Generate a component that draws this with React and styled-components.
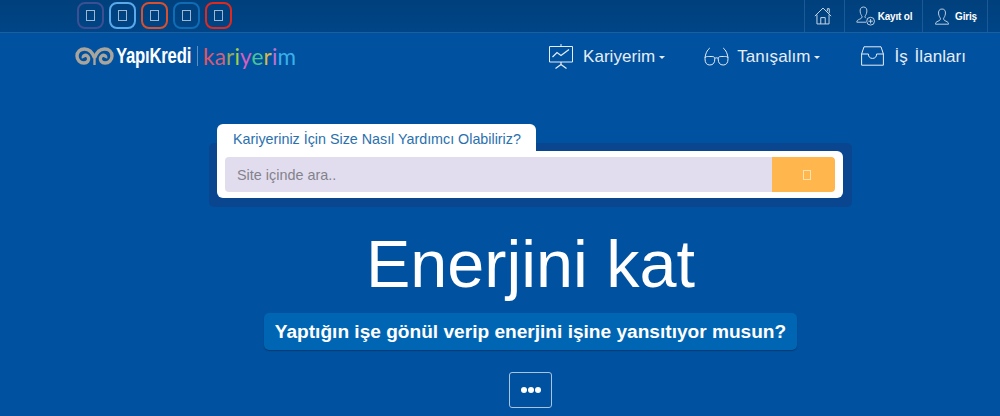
import React from "react";
import styled, {createGlobalStyle} from "styled-components";

const GlobalStyle = createGlobalStyle`
  html, body {
    margin: 0;
    padding: 0;
    height: 416px;
    overflow: hidden;
    background: #00519f;
    font-family: "Liberation Sans", Arial, sans-serif;
  }
`

const Page = styled.div`
  width: 1000px;
  height: 416px;
  overflow: hidden;
  background: #00519f;
`

const TopBar = styled.div`
  height: 32px;
  display: flex;
  justify-content: space-between;
  padding: 0 12px 0 77px;
  background: linear-gradient(to bottom, #00407c, #004587);
  border-bottom: 1px solid #1a5f9f;
`

const Socials = styled.div`
  display: flex;
  gap: 5px;
  padding-top: 2px;
`

const SocialButton = styled.a`
  box-sizing: border-box;
  width: 27px;
  height: 27px;
  display: flex;
  align-items: center;
  justify-content: center;
  border: 2px solid ${props => props.$color};
  border-radius: 8px;
`

const Tofu = styled.span`
  box-sizing: border-box;
  display: block;
  width: ${props => props.$w || 9}px;
  height: ${props => props.$h || 11}px;
  border: 1.5px solid ${props => props.$color || "#9fb6d0"};
`

const UserMenu = styled.div`
  display: flex;
  border-right: 1px solid #1a5a98;
`

const UserItem = styled.a`
  box-sizing: border-box;
  width: ${props => props.$w}px;
  display: flex;
  align-items: center;
  justify-content: center;
  gap: ${props => props.$gap || 2}px;
  padding: 0 ${props => props.$padRight || 0}px 0 ${props => props.$pad || 0}px;
  border-left: 1px solid #1a5a98;
  color: #fff;
  font-size: 10px;
  font-weight: bold;
  letter-spacing: -0.2px;
`

const NavBar = styled.div`
  height: 46px;
  display: flex;
  align-items: center;
  justify-content: space-between;
  padding: 0 34px 0 75px;
`

const Logo = styled.div`
  display: flex;
  align-items: center;
  height: 24px;
`

const BrandName = styled.span`
  display: inline-block;
  width: 76px;
  margin-left: 2px;
  font-size: 22px;
  font-weight: bold;
  color: #fff;
  letter-spacing: -0.3px;
  white-space: nowrap;
  transform: scaleX(0.76);
  transform-origin: left center;
`

const BrandRule = styled.span`
  width: 1px;
  height: 20px;
  margin: 0 5px 0 5px;
  background: #5f8fc0;
`

const Careers = styled.span`
  font-family: Lato, "Liberation Sans", sans-serif;
  font-size: 22.5px;
  letter-spacing: 0.2px;
`

const Letter = styled.span`
  color: ${props => props.$color};
`

const Nav = styled.nav`
  display: flex;
  align-items: center;
`

const NavItem = styled.a`
  display: flex;
  align-items: center;
  margin-left: ${props => props.$gap}px;
  color: #e6edf6;
  font-size: 17px;
  letter-spacing: 0.05px;
  word-spacing: 2px;
`

const NavLabel = styled.span`
  margin: 2px 0 0 ${props => props.$gap}px;
`

const Caret = styled.span`
  width: 0;
  height: 0;
  margin: 2px 0 0 4px;
  border-left: 3px solid transparent;
  border-right: 3px solid transparent;
  border-top: 3px solid #e6edf6;
`

const Hero = styled.main`
  display: flex;
  flex-direction: column;
  align-items: center;
  padding-left: 61px;
`

const SearchFrame = styled.div`
  position: relative;
  box-sizing: border-box;
  width: 643px;
  height: 64px;
  margin-top: 64px;
  padding: 8px;
  background: #0a4690;
  border-radius: 5px;
`

const SearchTab = styled.div`
  position: absolute;
  top: -19px;
  left: 8px;
  box-sizing: border-box;
  width: 319px;
  height: 28px;
  padding: 7px 0 0 16px;
  background: #fff;
  border-radius: 6px 6px 0 0;
  color: #2a70ae;
  font-size: 14.3px;
`

const SearchBox = styled.form`
  box-sizing: border-box;
  width: 626px;
  height: 47px;
  display: flex;
  padding: 6px 8px;
  background: #fff;
  border-radius: 0 6px 6px 6px;
`

const SearchInput = styled.input`
  flex: 1;
  min-width: 0;
  box-sizing: border-box;
  height: 35px;
  padding: 0 12px;
  border: 0;
  outline: 0;
  border-radius: 4px 0 0 4px;
  background: #e2ddee;
  font-family: inherit;
  font-size: 14.4px;

  &::placeholder {
    color: #83828c;
    opacity: 1;
  }
`

const SearchButton = styled.button`
  width: 63px;
  height: 35px;
  display: flex;
  align-items: center;
  justify-content: center;
  padding: 0 0 0 7px;
  border: 0;
  border-radius: 0 4px 4px 0;
  background: #ffb74d;
`

const Title = styled.h1`
  margin: 22px 0 0;
  color: #fff;
  font-size: 66.5px;
  font-weight: normal;
  line-height: 70px;
`

const Slogan = styled.div`
  box-sizing: border-box;
  width: 533px;
  height: 37px;
  margin-top: 14px;
  display: flex;
  align-items: center;
  justify-content: center;
  background: #0066b3;
  border-radius: 5px;
  box-shadow: 0 1px 1px #003a72;
  color: #fff;
  font-size: 19.1px;
  font-weight: bold;
`

const MoreButton = styled.button`
  box-sizing: border-box;
  width: 43px;
  height: 36px;
  margin-top: 22px;
  display: flex;
  align-items: center;
  justify-content: center;
  gap: 1px;
  padding: 0;
  background: transparent;
  border: 1px solid #a9c4e0;
  border-radius: 3px;
`

const Dot = styled.span`
  width: 6px;
  height: 6px;
  border-radius: 50%;
  background: #fff;
`

const HomeIcon = () => (
    <svg width="18" height="18" viewBox="0 0 17 17" fill="none" stroke="#cfdcea" strokeWidth="0.9">
        <path d="M0.8 8.6 L8.5 1 L16.2 8.6"/>
        <path d="M2.8 7.2 V16 H14.2 V7.2"/>
        <path d="M6.4 16 V10 H10.6 V16"/>
        <path d="M12.6 4 V1.6 H14.4 V5.8"/>
    </svg>
)

const UserAddIcon = () => (
    <svg width="20" height="20" viewBox="0 0 20 20" fill="none" stroke="#cfdcea" strokeWidth="0.9">
        <path d="M7.5 1 C4.8 1 3.8 3 4.2 6 C4.5 8 5.4 9.4 6 10.2 C6.2 11.6 5.6 12.4 3.6 13.2 C1.8 13.9 0.8 14.6 0.8 16.2 H10"/>
        <path d="M7.5 1 C10.2 1 11.2 3 10.8 6 C10.5 8 9.6 9.4 9 10.2 C8.9 11 9.1 11.6 9.8 12.2"/>
        <circle cx="14.6" cy="15.2" r="3.9"/>
        <path d="M14.6 13 V17.4 M12.4 15.2 H16.8"/>
    </svg>
)

const UserIcon = () => (
    <svg width="14" height="17" viewBox="0 0 14 17" fill="none" stroke="#cfdcea" strokeWidth="0.9">
        <path d="M7 1 C4.2 1 3.2 3 3.6 6 C3.9 8 4.8 9.4 5.4 10.2 C5.6 11.6 5 12.4 3 13.2 C1.2 13.9 0.5 14.6 0.5 16.2 H13.5 C13.5 14.6 12.8 13.9 11 13.2 C9 12.4 8.4 11.6 8.6 10.2 C9.2 9.4 10.1 8 10.4 6 C10.8 3 9.8 1 7 1 Z"/>
    </svg>
)

const BoardIcon = () => (
    <svg width="24" height="25" viewBox="0 0 24 25" fill="none" stroke="#e6edf6" strokeWidth="1">
        <path d="M0.5 2.5 H23.5 V18 H0.5 Z"/>
        <path d="M12 2.5 V0"/>
        <path d="M3.5 13 L8 8.5 L12 11.5 L20 5.5" strokeWidth="1.2"/>
        <path d="M12 18 V20.5 M12 20.5 L6.5 24.5 M12 20.5 L17.5 24.5" strokeWidth="1.2"/>
    </svg>
)

const GlassesIcon = () => (
    <svg width="25" height="19" viewBox="0 0 25 19" fill="none" stroke="#e6edf6" strokeWidth="1">
        <path d="M1 12 C1 9.5 2 9.5 5.8 9.5 C9.5 9.5 10.8 9.5 10.8 12 C10.8 16 9 18 5.8 18 C2.8 18 1 16 1 12 Z"/>
        <path d="M14.2 12 C14.2 9.5 15.5 9.5 19.2 9.5 C23 9.5 24 9.5 24 12 C24 16 22.2 18 19.2 18 C16 18 14.2 16 14.2 12 Z"/>
        <path d="M10.8 11.4 C11.8 10.6 13.2 10.6 14.2 11.4"/>
        <path d="M1 11 C1.4 7 3 3 5.8 1"/>
        <path d="M24 11 C23.6 7 22 3 19.2 1"/>
    </svg>
)

const InboxIcon = () => (
    <svg width="23" height="20" viewBox="0 0 23 20" fill="none" stroke="#e6edf6" strokeWidth="1">
        <path d="M3 0.8 H20 L22.4 8 V19.2 H0.6 V8 Z"/>
        <path d="M0.6 8 H7.4 C7.4 11 9 12.4 11.5 12.4 C14 12.4 15.6 11 15.6 8 H22.4"/>
    </svg>
)

const Swirl = () => (
    <svg width="39" height="19" viewBox="0 0 39 19" fill="none" stroke="#a9a59c" strokeWidth="3.4">
        <path d="M19.5 11 C17 4 13.5 2 9.5 2 C5 2 2 5 2 9 C2 13 5 16 9 16 C12.5 16 14 13.5 13.6 11 C13.2 9 11.5 8 9.8 8.4 C8.4 8.8 8 10 8.4 11"/>
        <path d="M19.5 11 C22 4 25.5 2 29.5 2 C34 2 37 5 37 9 C37 13 34 16 30 16 C26.5 16 25 13.5 25.4 11 C25.8 9 27.5 8 29.2 8.4 C30.6 8.8 31 10 30.6 11"/>
        <path d="M19.5 11 V18" strokeWidth="2.4"/>
    </svg>
)

const socials = ["#3c4f92", "#5aa9ea", "#d9502e", "#0f6cb5", "#e0281e"]

const careerLetters = [
    ["k", "#e0566a"], ["a", "#d0607f"], ["r", "#94a85c"], ["i", "#a8cc4a"], ["y", "#d75fc0"],
    ["e", "#4cc39a"], ["r", "#d8b84a"], ["i", "#c070d0"], ["m", "#3ab0ea"],
]

const App = () => {
    return (
        <Page>
            <GlobalStyle/>
            <TopBar>
                <Socials>
                    {socials.map(color => (
                        <SocialButton key={color} $color={color}><Tofu/></SocialButton>
                    ))}
                </Socials>
                <UserMenu>
                    <UserItem $w={40} $padRight={4}><HomeIcon/></UserItem>
                    <UserItem $w={78} $pad={1}><UserAddIcon/>Kayıt ol</UserItem>
                    <UserItem $w={65} $gap={6} $pad={2}><UserIcon/>Giriş</UserItem>
                </UserMenu>
            </TopBar>
            <NavBar>
                <Logo>
                    <Swirl/>
                    <BrandName>YapıKredi</BrandName>
                    <BrandRule/>
                    <Careers>
                        {careerLetters.map(([letter, color], index) => (
                            <Letter key={index} $color={color}>{letter}</Letter>
                        ))}
                    </Careers>
                </Logo>
                <Nav>
                    <NavItem $gap={0}><BoardIcon/><NavLabel $gap={10}>Kariyerim</NavLabel><Caret/></NavItem>
                    <NavItem $gap={39}><GlassesIcon/><NavLabel $gap={8}>Tanışalım</NavLabel><Caret/></NavItem>
                    <NavItem $gap={41}><InboxIcon/><NavLabel $gap={10}>İş İlanları</NavLabel></NavItem>
                </Nav>
            </NavBar>
            <Hero>
                <SearchFrame>
                    <SearchTab>Kariyeriniz İçin Size Nasıl Yardımcı Olabiliriz?</SearchTab>
                    <SearchBox>
                        <SearchInput placeholder="Site içinde ara.."/>
                        <SearchButton type="button"><Tofu $w={8} $h={10} $color="#ffe2ae"/></SearchButton>
                    </SearchBox>
                </SearchFrame>
                <Title>Enerjini kat</Title>
                <Slogan>Yaptığın işe gönül verip enerjini işine yansıtıyor musun?</Slogan>
                <MoreButton type="button"><Dot/><Dot/><Dot/></MoreButton>
            </Hero>
        </Page>
    )
}

export default App;
